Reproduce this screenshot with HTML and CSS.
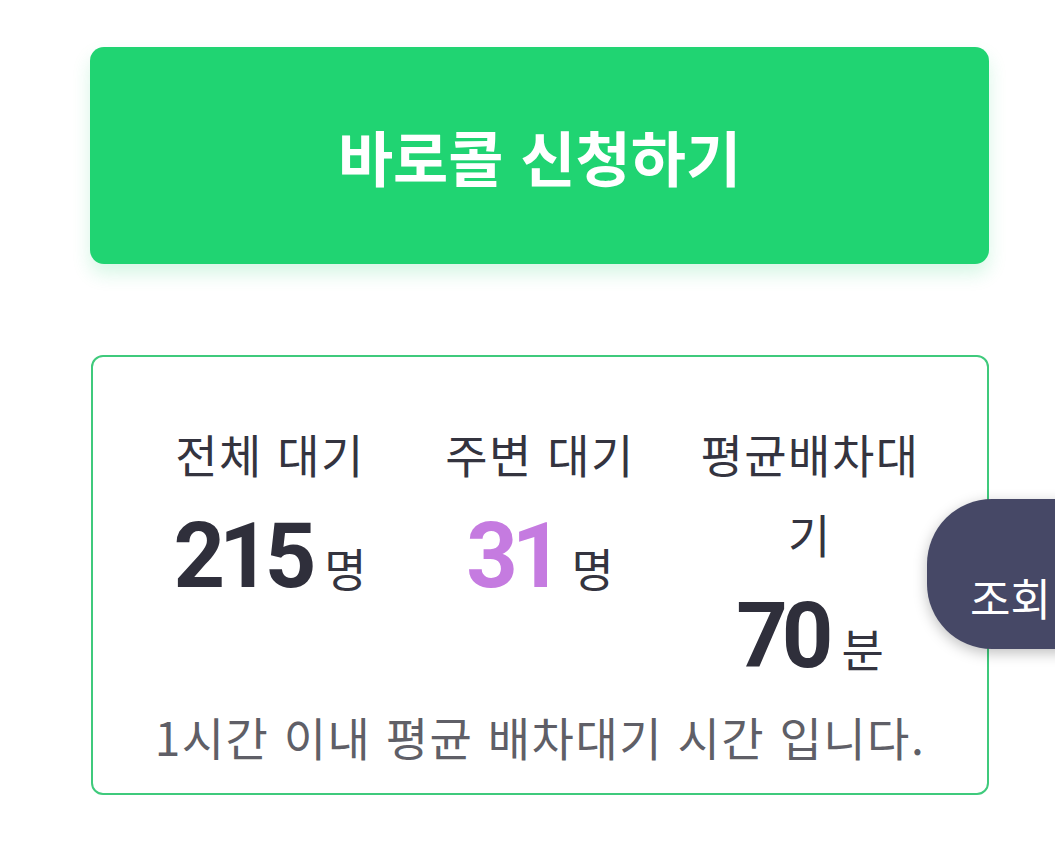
FILE: index.html
```html
<!DOCTYPE html>
<html lang="ko">
<head>
<meta charset="utf-8">
<title>바로콜</title>
<link rel="stylesheet" href="styles.css">
</head>
<body>
<main class="page">
  <button class="call-btn" type="button">바로콜 신청하기</button>
  <section class="stats">
    <div class="stats-row">
      <div class="stat">
        <div class="stat-label">전체 대기</div>
        <div class="stat-value"><span class="num">215</span><span class="unit">명</span></div>
      </div>
      <div class="stat">
        <div class="stat-label">주변 대기</div>
        <div class="stat-value"><span class="num num-accent">31</span><span class="unit">명</span></div>
      </div>
      <div class="stat">
        <div class="stat-label">평균배차대기</div>
        <div class="stat-value"><span class="num">70</span><span class="unit">분</span></div>
      </div>
    </div>
    <p class="stats-note">1시간 이내 평균 배차대기 시간 입니다.</p>
  </section>
</main>
<div class="float-tab">조회</div>
</body>
</html>
```
FILE: styles.css
```css
html, body {
  margin: 0;
  padding: 0;
  background: #ffffff;
}
body {
  font-family: "Noto Sans CJK KR", "Noto Sans", sans-serif;
  width: 1055px;
  height: 851px;
  overflow: hidden;
  position: relative;
}
.page {
  padding-top: 47px;
  margin-left: 90px;
  width: 899px;
}
.call-btn {
  display: block;
  width: 100%;
  height: 217px;
  border: none;
  border-radius: 14px;
  background: #20d472;
  color: #ffffff;
  font-family: "Noto Sans CJK KR", sans-serif;
  font-weight: 700;
  font-size: 60px;
  letter-spacing: 0;
  box-shadow: 0 10px 18px rgba(32, 212, 114, 0.18);
  padding: 0;
}
.stats {
  margin-top: 91px;
  margin-left: 1px;
  border: 2px solid #3fca7c;
  border-radius: 12px;
  height: 440px;
  box-sizing: border-box;
  width: 898px;
  padding-top: 56px;
}
.stats-row {
  display: flex;
  justify-content: center;
  align-items: flex-start;
  gap: 20px;
}
.stat {
  width: 250px;
  text-align: center;
}
.stat-label {
  font-size: 46px;
  line-height: 80px;
  color: #34343f;
  word-break: break-all;
  letter-spacing: 1.5px;
}
.stat-value {
  display: flex;
  justify-content: center;
  align-items: baseline;
  line-height: 128px;
  height: 128px;
}
.num {
  font-family: Roboto, "Liberation Sans", sans-serif;
  font-weight: 700;
  font-size: 90px;
  letter-spacing: -6px;
  color: #2f2f3b;
  margin-right: 14px;
}
.num-accent {
  color: #c57be0;
}
.unit {
  font-size: 46px;
  color: #34343f;
}
.stats-note {
  margin: 5px 0 0;
  text-align: center;
  font-size: 46px;
  line-height: 60px;
  color: #5f5f67;
  letter-spacing: 1.5px;
}
.float-tab {
  position: absolute;
  left: 927px;
  top: 499px;
  width: 200px;
  height: 150px;
  border-radius: 65px 0 0 65px;
  background: #464866;
  color: #ffffff;
  font-size: 44px;
  box-sizing: border-box;
  padding-left: 43px;
  padding-top: 68px;
  line-height: 60px;
  box-shadow: 0 4px 14px rgba(0, 0, 0, 0.25);
}
```
